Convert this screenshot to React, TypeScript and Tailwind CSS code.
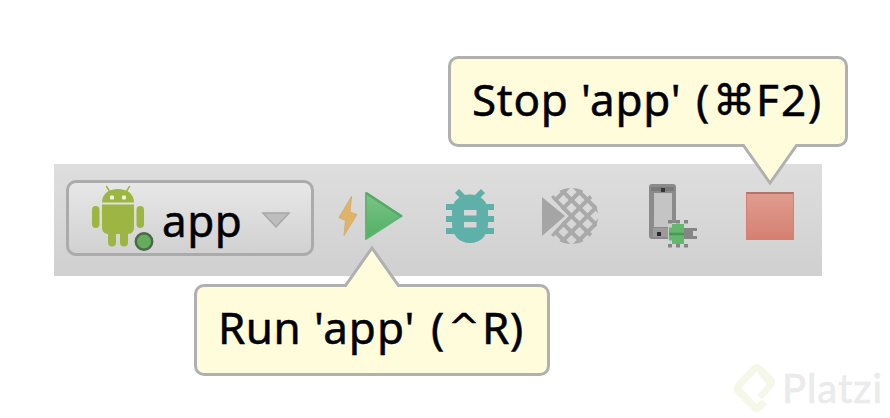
import React from "react";

const textFont = "font-['Noto_Sans','Open_Sans',sans-serif] text-[44px] leading-[60px] text-black [-webkit-text-stroke:0.5px_black]";

function Word({ children, className }: { children: React.ReactNode; className: string }) {
  return <span className={`block shrink-0 whitespace-pre ${className}`}>{children}</span>;
}

function AndroidIcon() {
  return (
    <svg width="64" height="66" viewBox="0 0 64 66" className="block shrink-0">
      <g fill="#9db643">
        <path d="M12 17.5C12 9 18.5 4 28 4S44 9 44 17.5Z" />
        <path d="M12 19.5H44V42Q44 49 38 49V57.5A4 4 0 0 1 30 57.5V49H26V57.5A4 4 0 0 1 18 57.5V49Q12 49 12 42Z" />
        <rect x="2" y="21" width="7.5" height="22" rx="3.7" />
        <rect x="46.5" y="21" width="7.5" height="22" rx="3.7" />
        <path d="M16.5 1.5 20 7M39.5 1.5 36 7" stroke="#9db643" strokeWidth="1.5" strokeLinecap="round" />
      </g>
      <rect x="20" y="10.5" width="4" height="4" rx="1" fill="#edf3dc" />
      <rect x="32" y="10.5" width="4" height="4" rx="1" fill="#edf3dc" />
      <circle cx="54" cy="56.5" r="8.2" fill="#65ad5d" stroke="#4c6849" strokeWidth="2.5" />
    </svg>
  );
}

function RunIcon() {
  return (
    <svg width="66" height="52" viewBox="0 0 66 52" className="block shrink-0">
      <defs>
        <linearGradient id="run" x1="0" y1="0" x2="0" y2="1">
          <stop stopColor="#7cc388" />
          <stop offset="1" stopColor="#50b062" />
        </linearGradient>
      </defs>
      <path d="M13.5 6.5 1 27.5 7.5 30.5 6 45.5 19 24.5 12 22Z" fill="#dfb368" stroke="#d3af78" strokeWidth="1" />
      <path d="M28 3 63.5 26 28 49Z" fill="url(#run)" stroke="#5fb671" strokeWidth="2" strokeLinejoin="round" />
      <path d="M29 3.5 63 26" stroke="#56aa68" strokeWidth="2.5" strokeLinecap="round" />
    </svg>
  );
}

function BugIcon() {
  return (
    <svg width="48" height="54" viewBox="0 0 48 54" className="block shrink-0" fill="#5eb0a9">
      <path d="M9 4 13 0 21 8 17 12ZM39 4 35 0 27 8 31 12Z" />
      <path d="M0 15H48V21H0ZM0 27H48V33H0ZM0 39H48V45H0Z" />
      <path fillRule="evenodd" d="M24 5.5C13 5.5 6 13 6 22V35C6 46 13 54 24 54S42 46 42 35V22C42 13 35 5.5 24 5.5ZM18 21H30.5V26.5H18ZM18 33H30.5V38.5H18Z" />
    </svg>
  );
}

function CoverageIcon() {
  return (
    <svg width="58" height="58" viewBox="0 0 58 58" className="block shrink-0">
      <defs>
        <clipPath id="coverage">
          <path d="M10 10Q19 1 30 1C46 1 57 13 57 29S46 57 30 57Q19 57 10 48L27 29Z" />
        </clipPath>
      </defs>
      <path d="M1 10 24 29 1 49Z" fill="#a5a5a5" />
      <g clipPath="url(#coverage)" stroke="#a9a9a9" strokeWidth="4">
        <path d="M0 46.5 60 106.5M0 30.5 60 90.5M0 14.5 60 74.5M0 -1.5 60 58.5M0 -17.5 60 42.5M0 -33.5 60 26.5M0 -49.5 60 10.5" />
        <path d="M0 11.5 12 -.5M0 27.5 28 -.5M0 43.5 60 -16.5M0 59.5 60 -.5M0 75.5 60 15.5M0 91.5 60 31.5M0 107.5 60 47.5" />
      </g>
    </svg>
  );
}

function DeviceIcon() {
  return (
    <svg width="50" height="66" viewBox="0 0 50 66" className="block shrink-0">
      <rect x="1" y="1" width="27" height="55" rx="3" fill="#8b8b8b" />
      <path d="M3 4H26V8H3Z" fill="#7b7b7b" />
      <rect x="6" y="10" width="18" height="34" fill="#c4c4c4" />
      <rect x="5" y="45" width="19" height="9" fill="#9b9b9b" />
      <path d="M20 40H29V57H20Z" fill="#cdcdcd" />
      <rect x="13" y="5" width="4" height="4" fill="#343434" />
      <rect x="9" y="49" width="4" height="4" fill="#292929" />
      <g fill="#858585">
        <path d="M20 37H24V40.5H20ZM28 37H32V40.5H28ZM36 37H40V40.5H36ZM20 61H24V64.5H20ZM28 61H32V64.5H28ZM36 61H40V64.5H36Z" />
        <path d="M36 45H49V48H45V53H49V56H36Z" />
      </g>
      <path d="M21 44.5H24V41H36V61H24V57.5H21Z" fill="#63b86e" />
      <path d="M21 51H36" stroke="#4f9458" strokeWidth="2.5" />
    </svg>
  );
}

export default function App() {
  return (
    <main className="relative h-[418px] w-[890px] overflow-hidden bg-white pl-[54px] pt-[164px]">
      <div className="flex h-[112px] w-[768px] bg-linear-to-b from-[#dedede] to-[#d0d0d0] pl-3 pt-4">
        <button className={`flex h-[76px] w-[248px] shrink-0 rounded-[10px] border-[3px] border-[#ababab] bg-linear-to-b from-[#e7e7e7] to-[#d1d1d1] pl-[21px] pt-[2px] ${textFont}`}>
          <AndroidIcon />
          <Word className="ml-[8px] mt-[5px] w-[78px] text-left tracking-[0.5px]">app</Word>
          <svg width="30" height="18" viewBox="0 0 30 18" className="ml-[21px] mt-[26px] block shrink-0">
            <path d="M2 2H28L15 16Z" fill="#bdbdbd" stroke="#a6a6a6" strokeWidth="1.5" />
          </svg>
        </button>
        <div className="ml-6 mt-[10px]"><RunIcon /></div>
        <div className="ml-[42px] mt-[9px]"><BugIcon /></div>
        <div className="ml-[47px] mt-[7px]"><CoverageIcon /></div>
        <div className="ml-[49px] mt-[3px]"><DeviceIcon /></div>
        <div className="ml-[48px] mt-3 h-[48px] w-[48px] border border-t-2 border-[#d57f71] border-t-[#b97267] bg-linear-to-b from-[#df9d8f] to-[#d58071]" />
      </div>

      <div role="tooltip" className={`absolute left-[448px] top-[56px] flex h-[91px] w-[400px] rounded-[10px] border-[3px] border-[#b0b0b0] bg-[#fffcdc] pl-[21px] pt-[10px] ${textFont}`}>
        <Word className="w-[109px] tracking-[0.7px]">Stop</Word>
        <Word className="w-[115px] tracking-[0.8px]">'app'</Word>
        <Word className="w-[17px]">(</Word>
        <Word className="mt-[2px] w-[43px] font-['DejaVu_Sans',sans-serif] text-[42px]">⌘</Word>
        <Word className="w-[25px]">F</Word>
        <Word className="w-[27px]">2</Word>
        <Word className="w-[14px]">)</Word>
        <svg width="60" height="46" viewBox="0 0 60 46" className="absolute left-[289px] top-[82px] block">
          <path d="M3.5 0V4L30 42 56.5 4V0Z" fill="#fffcdc" />
          <path d="M1 4.5H3.5L30 42 56.5 4.5H59" fill="none" stroke="#b0b0b0" strokeWidth="3" />
        </svg>
      </div>

      <div role="tooltip" className={`absolute left-[194px] top-[284px] flex h-[92px] w-[356px] rounded-[10px] border-[3px] border-[#b0b0b0] bg-[#fffcdc] pl-[21px] pt-[10px] ${textFont}`}>
        <Word className="w-[96px] tracking-[0.5px]">Run</Word>
        <Word className="w-[117px] tracking-[1px]">'app'</Word>
        <Word className="w-[17px]">(</Word>
        <Word className="w-[34px] font-['DejaVu_Sans',sans-serif] text-[38px]">^</Word>
        <Word className="w-[28px]">R</Word>
        <Word className="w-[14px]">)</Word>
        <svg width="60" height="46" viewBox="0 0 60 46" className="absolute left-[145px] top-[-43px] block">
          <path d="M3.5 46V41.5L30 4 56.5 41.5V46Z" fill="#fffcdc" />
          <path d="M1 41.5H3.5L30 4 56.5 41.5H59" fill="none" stroke="#b0b0b0" strokeWidth="3" />
        </svg>
      </div>

      <div className="absolute left-[732px] top-[362px] flex">
        <svg width="46" height="54" viewBox="0 0 46 54" className="block shrink-0" fill="#f5f8e9">
          <path d="M30.3 37.3 35.3 42.3 28 49Q24.500 52 21 49L3 31Q0 27 3 22L20 4Q24.7 0 29.5 4L41 15Q45 20 41.5 25ZM25.3 33.7 34.7 22.3 24.7 9.7 9.5 25.7 24.5 42 30.3 37.3Z" fillRule="evenodd" />
        </svg>
        <span className="ml-[4px] mt-[2px] block font-['Lato',sans-serif] text-[40px] leading-[48px] tracking-[1px] text-[#ebebeb] [-webkit-text-stroke:0.7px_#ebebeb]">Platzi</span>
      </div>
    </main>
  );
}
